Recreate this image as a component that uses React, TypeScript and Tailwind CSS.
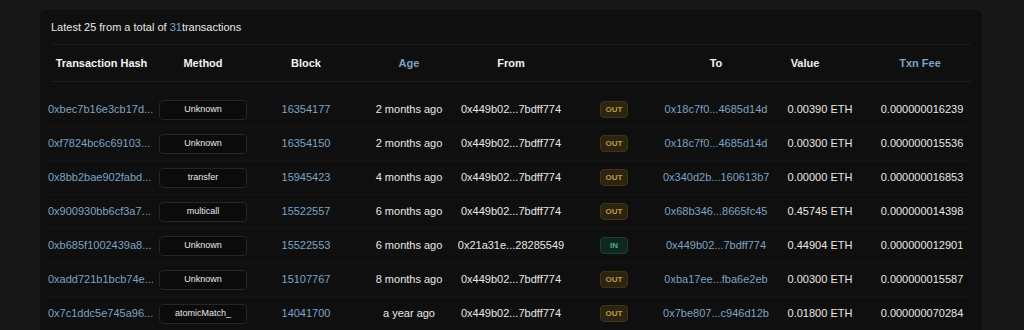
import React from "react";

type Row = {
  hash: string;
  method: string;
  block: string;
  age: string;
  from: string;
  dir: "OUT" | "IN";
  to: string;
  value: string;
  fee: string;
};

const rows: Row[] = [
  { hash: "0xbec7b16e3cb17d...", method: "Unknown", block: "16354177", age: "2 months ago", from: "0x449b02...7bdff774", dir: "OUT", to: "0x18c7f0...4685d14d", value: "0.00390 ETH", fee: "0.000000016239" },
  { hash: "0xf7824bc6c69103...", method: "Unknown", block: "16354150", age: "2 months ago", from: "0x449b02...7bdff774", dir: "OUT", to: "0x18c7f0...4685d14d", value: "0.00300 ETH", fee: "0.000000015536" },
  { hash: "0x8bb2bae902fabd...", method: "transfer", block: "15945423", age: "4 months ago", from: "0x449b02...7bdff774", dir: "OUT", to: "0x340d2b...160613b7", value: "0.00000 ETH", fee: "0.000000016853" },
  { hash: "0x900930bb6cf3a7...", method: "multicall", block: "15522557", age: "6 months ago", from: "0x449b02...7bdff774", dir: "OUT", to: "0x68b346...8665fc45", value: "0.45745 ETH", fee: "0.000000014398" },
  { hash: "0xb685f1002439a8...", method: "Unknown", block: "15522553", age: "6 months ago", from: "0x21a31e...28285549", dir: "IN", to: "0x449b02...7bdff774", value: "0.44904 ETH", fee: "0.000000012901" },
  { hash: "0xadd721b1bcb74e...", method: "Unknown", block: "15107767", age: "8 months ago", from: "0x449b02...7bdff774", dir: "OUT", to: "0xba17ee...fba6e2eb", value: "0.00300 ETH", fee: "0.000000015587" },
  { hash: "0x7c1ddc5e745a96...", method: "atomicMatch_", block: "14041700", age: "a year ago", from: "0x449b02...7bdff774", dir: "OUT", to: "0x7be807...c946d12b", value: "0.01800 ETH", fee: "0.000000070284" },
];

const cols = "grid grid-cols-[107px_96px_110px_96px_108px_98px_106px_102px_102px]";

export default function App() {
  return (
    <div
      className="w-full h-[330px] overflow-hidden bg-[#171717] pt-[10px] pl-[40px]"
      style={{ fontFamily: '"Liberation Sans", Arial, Helvetica, sans-serif' }}
    >
      <div className="w-[942px] h-[340px] rounded-[6px] bg-[#0f0f0f] px-[8px] pt-[10px]">
        <div className="pl-[3px] h-[14px] leading-[14px] text-[11px] text-[#e8e8e8]">
          Latest 25 from a total of <span className="text-[#7ba3c4]">31</span>transactions
        </div>
        <div className="mt-[10px] mx-[3px] h-px bg-[#1c1c1c]" />
        <div className={`${cols} h-[36px] items-center text-[11px] font-bold text-[#f2f2f2]`}>
          <div className="text-center">Transaction Hash</div>
          <div className="text-center">Method</div>
          <div className="text-center">Block</div>
          <div className="text-center text-[#7ba3c4]">Age</div>
          <div className="text-center">From</div>
          <div />
          <div className="text-center">To</div>
          <div className="text-center pr-[30px]">Value</div>
          <div className="text-center pr-[4px] text-[#7ba3c4]">Txn Fee</div>
        </div>
        <div className="mx-[3px] h-px bg-[#1c1c1c]" />
        <div className="h-[11px]" />
        {rows.map((r) => (
          <div
            key={r.hash}
            className={`${cols} h-[34px] items-center border-b border-[#141414] text-[11px] text-[#e8e8e8] whitespace-nowrap`}
          >
            <div className="text-[#7ba3c4]">{r.hash}</div>
            <div className="flex justify-center">
              <div className="w-[88px] h-[20px] rounded-[4px] border border-[#252525] bg-[#0b0b0b] flex items-center justify-center text-[9px] text-[#e8e8e8]">
                {r.method}
              </div>
            </div>
            <div className="text-center text-[#7ba3c4]">{r.block}</div>
            <div className="text-center">{r.age}</div>
            <div className="text-center">{r.from}</div>
            <div className="flex justify-center">
              {r.dir === "OUT" ? (
                <div className="w-[28px] h-[17px] rounded-[4px] border border-[#3f3415] bg-[#2b2410] flex items-center justify-center text-[8px] font-bold text-[#c09a3e]">
                  OUT
                </div>
              ) : (
                <div className="w-[28px] h-[17px] rounded-[4px] border border-[#1d4034] bg-[#0f2720] flex items-center justify-center text-[8px] font-bold text-[#4fae86]">
                  IN
                </div>
              )}
            </div>
            <div className="text-center text-[#7ba3c4]">{r.to}</div>
            <div className="text-center">{r.value}</div>
            <div className="text-center">{r.fee}</div>
          </div>
        ))}
      </div>
    </div>
  );
}
